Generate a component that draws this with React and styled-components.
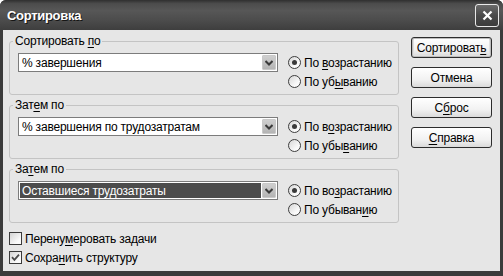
import React from "react";
import styled, { createGlobalStyle } from "styled-components";

const GlobalStyle = createGlobalStyle`
  html, body {
    margin: 0;
    padding: 0;
    background: #ffffff;
  }
  body {
    font-family: "Liberation Sans", Arial, sans-serif;
    font-size: 12px;
    letter-spacing: -0.2px;
    color: #000;
  }
`;

const Window = styled.div`
  width: 503px;
  height: 276px;
  display: flex;
  flex-direction: column;
  background: #3b3b3b;
  border-radius: 6px 6px 0 0;
  overflow: hidden;
`;

const TitleBar = styled.div`
  height: 30px;
  flex: none;
  display: flex;
  align-items: center;
  justify-content: space-between;
  padding: 0 4px 0 7px;
  background: linear-gradient(
    #2f2f2f 0%,
    #4c4c4c 12%,
    #575757 35%,
    #4b4b4b 70%,
    #3e3e3e 100%
  );
`;

const Title = styled.span`
  font-weight: bold;
  font-size: 13px;
  letter-spacing: -0.3px;
  color: #fff;
  text-shadow: 1px 1px 0 #151515;
`;

const CloseButton = styled.div`
  width: 22px;
  height: 21px;
  border: 1px solid #e8e8e8;
  border-radius: 3px;
  background: linear-gradient(#6a6a6a, #4a4a4a 50%, #3c3c3c);
  display: flex;
  align-items: center;
  justify-content: center;
`;

const Body = styled.div`
  flex: 1;
  margin: 0 3px 5px;
  background: #e6e6e6;
  display: flex;
  gap: 12px;
  padding: 4px 8px 0 6px;
`;

const LeftColumn = styled.div`
  width: 390px;
  flex: none;
  display: flex;
  flex-direction: column;
  gap: 3px;
`;

const Group = styled.fieldset`
  margin: 0;
  padding: 5px 8px 3px;
  border: 1px solid #c4c4c4;
  border-radius: 3px;
  min-width: 0;
`;

const Legend = styled.legend`
  padding: 0 2px;
  margin-left: -5px;
  line-height: 14px;
  color: #000;
`;

const GroupRow = styled.div`
  display: flex;
  align-items: flex-start;
`;

const Combo = styled.div`
  width: 260px;
  height: 19px;
  flex: none;
  box-sizing: border-box;
  border: 1px solid #7c7c7c;
  background: #fff;
  display: flex;
  align-items: stretch;
  padding: 1px;
`;

const ComboText = styled.div`
  flex: 1;
  display: flex;
  align-items: center;
  padding-left: 2px;
  margin-right: 1px;
  background: ${(p) => (p.$selected ? "#4c4c4c" : "transparent")};
  color: ${(p) => (p.$selected ? "#fff" : "#000")};
  white-space: nowrap;
`;

const ComboButton = styled.div`
  width: 12px;
  display: flex;
  align-items: center;
  justify-content: center;
  background: linear-gradient(#cfcfcf, #b4b4b4);
  border: 1px solid #c9c9c9;
  border-radius: 1px;
`;

const RadioColumn = styled.div`
  margin-left: 10px;
  display: flex;
  flex-direction: column;
`;

const OptionRow = styled.div`
  height: 19px;
  display: flex;
  align-items: center;
  gap: 3px;
  white-space: nowrap;
`;

const RadioCircle = styled.span`
  width: 13px;
  height: 13px;
  flex: none;
  box-sizing: border-box;
  border: 1px solid #3e3e3e;
  border-radius: 50%;
  background: linear-gradient(135deg, #d6d6d6, #fafafa 70%);
  display: flex;
  align-items: center;
  justify-content: center;
  &::after {
    content: "";
    display: ${(p) => (p.$checked ? "block" : "none")};
    width: 5px;
    height: 5px;
    border-radius: 50%;
    background: #3a3a3a;
  }
`;

const CheckList = styled.div`
  margin-top: 3px;
  display: flex;
  flex-direction: column;
`;

const CheckBox = styled.span`
  width: 13px;
  height: 13px;
  flex: none;
  box-sizing: border-box;
  border: 1px solid #3a3a3a;
  background: linear-gradient(135deg, #d4d4d4, #fbfbfb 75%);
  display: flex;
  align-items: center;
  justify-content: center;
`;

const ButtonColumn = styled.div`
  width: 81px;
  flex: none;
  padding-top: 3px;
  display: flex;
  flex-direction: column;
  gap: 9px;
`;

const Button = styled.div`
  height: 21px;
  box-sizing: border-box;
  border: 1px solid #2c2c2c;
  border-radius: 3px;
  background: linear-gradient(#ffffff, #f2f2f2 60%, #dadada);
  box-shadow: ${(p) =>
    p.$default ? "inset 0 0 0 1px #bdbdbd, inset 0 -1px 0 2px #e0e0e0" : "none"};
  display: flex;
  align-items: center;
  justify-content: center;
  white-space: nowrap;
`;

const U = styled.u`
  text-decoration: underline;
  text-underline-offset: 2px;
`;

const Chevron = () => (
  <svg width="8" height="6" viewBox="0 0 8 6">
    <path d="M0.5 1 L4 4.5 L7.5 1" fill="none" stroke="#3a3a3a" strokeWidth="2" />
  </svg>
);

const Check = () => (
  <svg width="9" height="9" viewBox="0 0 9 9">
    <path d="M1 4.2 L3.4 6.8 L8 1.6" fill="none" stroke="#4a4a4a" strokeWidth="1.8" />
  </svg>
);

const CloseX = () => (
  <svg width="11" height="11" viewBox="0 0 11 11">
    <path d="M1.5 1.5 L9.5 9.5 M9.5 1.5 L1.5 9.5" stroke="#fff" strokeWidth="2.2" />
  </svg>
);

const SortGroup = ({ legend, value, selected, asc, desc }) => (
  <Group>
    <Legend>{legend}</Legend>
    <GroupRow>
      <Combo>
        <ComboText $selected={selected}>{value}</ComboText>
        <ComboButton>
          <Chevron />
        </ComboButton>
      </Combo>
      <RadioColumn>
        <OptionRow>
          <RadioCircle $checked />
          <span>{asc}</span>
        </OptionRow>
        <OptionRow>
          <RadioCircle />
          <span>{desc}</span>
        </OptionRow>
      </RadioColumn>
    </GroupRow>
  </Group>
);

const App = () => (
  <>
    <GlobalStyle />
    <Window>
      <TitleBar>
        <Title>Сортировка</Title>
        <CloseButton>
          <CloseX />
        </CloseButton>
      </TitleBar>
      <Body>
        <LeftColumn>
          <SortGroup
            legend={<>Сортировать <U>п</U>о</>}
            value="% завершения"
            asc={<>По <U>в</U>озрастанию</>}
            desc={<>По уб<U>ы</U>ванию</>}
          />
          <SortGroup
            legend={<>Зат<U>е</U>м по</>}
            value="% завершения по трудозатратам"
            asc={<>По в<U>о</U>зрастанию</>}
            desc={<>По убы<U>в</U>анию</>}
          />
          <SortGroup
            legend={<>За<U>т</U>ем по</>}
            value="Оставшиеся трудозатраты"
            selected
            asc={<>По во<U>з</U>растанию</>}
            desc={<>По убыван<U>и</U>ю</>}
          />
          <CheckList>
            <OptionRow>
              <CheckBox />
              <span>Перену<U>м</U>еровать задачи</span>
            </OptionRow>
            <OptionRow>
              <CheckBox>
                <Check />
              </CheckBox>
              <span>Сохра<U>н</U>ить структуру</span>
            </OptionRow>
          </CheckList>
        </LeftColumn>
        <ButtonColumn>
          <Button $default>Сортироват<U>ь</U></Button>
          <Button>Отмена</Button>
          <Button>С<U>б</U>рос</Button>
          <Button><U>С</U>правка</Button>
        </ButtonColumn>
      </Body>
    </Window>
  </>
);

export default App;
